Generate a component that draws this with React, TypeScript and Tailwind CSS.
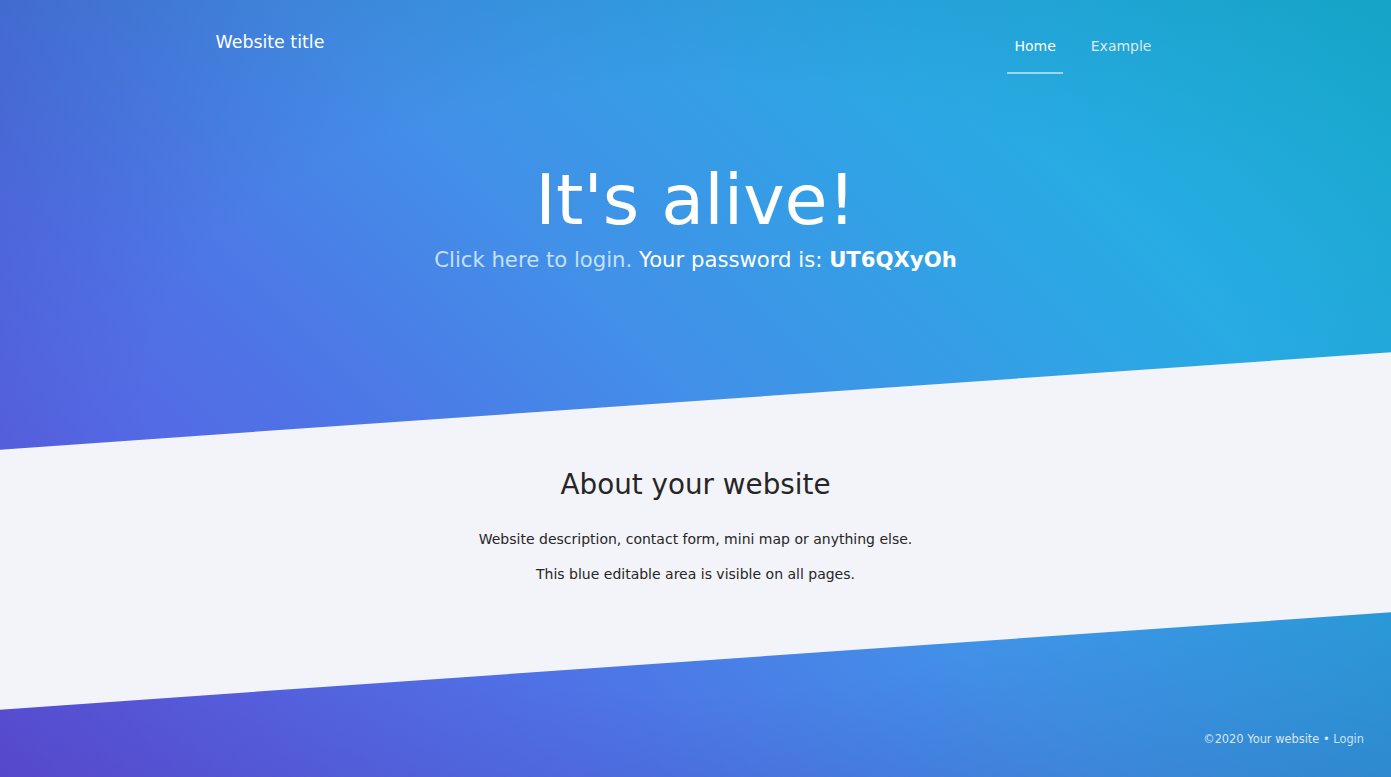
export default function App() {
  return (
    <div className="relative min-h-[777px] w-full overflow-hidden font-['DejaVu_Sans','Verdana',sans-serif] bg-[radial-gradient(ellipse_at_center,rgba(0,0,0,0)_55%,rgba(10,10,60,0.14)_100%),linear-gradient(45deg,#6252e2_0%,#4f72e6_30%,#4290e8_50%,#2aa9e4_75%,#17bddd_100%)]">
      <header className="mx-auto flex w-[960px] items-start justify-between">
        <div className="mt-[30px] text-[17.4px] leading-[24px] text-white">Website title</div>
        <nav className="mt-[36px] mr-[17px] flex gap-[21px] text-[14px]">
          <a className="border-b-2 border-[rgba(255,255,255,0.55)] px-[7px] pb-[16px] leading-[20px] text-white">
            Home
          </a>
          <a className="px-[7px] pb-[16px] leading-[20px] text-[#dfe9f2]">Example</a>
        </nav>
      </header>

      <section className="text-center text-white">
        <h1 className="mt-[84px] text-[70px] leading-[84px] font-normal">It's alive!</h1>
        <p className="mt-[3px] text-[21.2px] leading-[30px]">
          <span className="text-[#c4e0fb]">Click here to login.</span> Your password is:{" "}
          <b className="font-bold">UT6QXyOh</b>
        </p>
      </section>

      <section className="mt-[126px] h-[260px] bg-[#f3f4f9] [transform:skewY(-4deg)]">
        <div className="h-full text-center text-[#262626] [transform:skewY(4deg)]">
          <h2 className="pt-[67px] text-[27.8px] leading-[34px] font-normal">About your website</h2>
          <p className="mt-[27px] text-[14px] leading-[20px]">
            Website description, contact form, mini map or anything else.
          </p>
          <p className="mt-[15px] text-[14px] leading-[20px]">This blue editable area is visible on all pages.</p>
        </div>
      </section>

      <footer className="mt-[70px] flex justify-end pr-[27px] text-[11.4px] leading-[16px] text-[#d9e4f4]">
        <span>
          ©2020 Your website • <a className="text-[#c8e2fb]">Login</a>
        </span>
      </footer>
    </div>
  );
}
